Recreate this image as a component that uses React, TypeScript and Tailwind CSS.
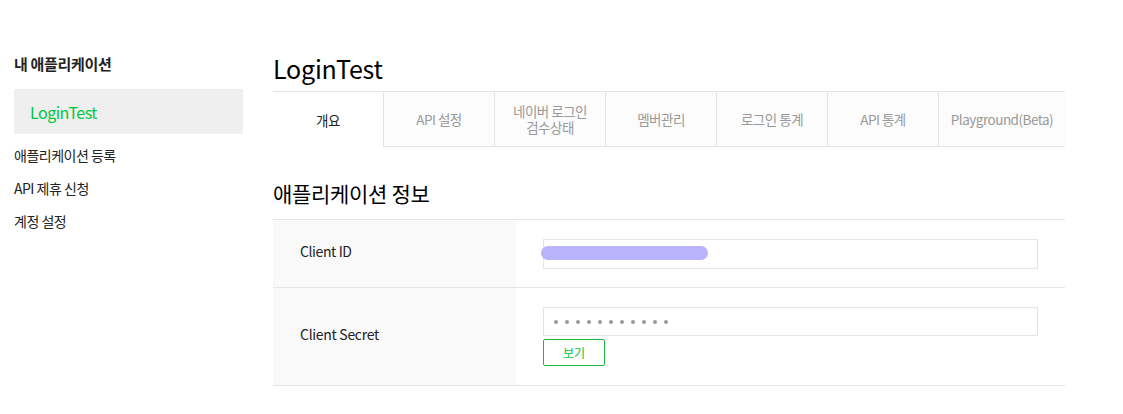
const tabs = ['개요', 'API 설정', '네이버 로그인\n검수상태', '멤버관리', '로그인 통계', 'API 통계', 'Playground(Beta)']

export default function App() {
  return (
    <div
      className="flex w-[1123px] h-[414px] bg-white text-[#333]"
      style={{ fontFamily: '"Noto Sans CJK KR", "Noto Sans", sans-serif' }}
    >
      {/* sidebar */}
      <div className="w-[229px] ml-[14px] pt-[53px] flex flex-col">
        <div className="text-[15px] font-bold leading-[22px] text-[#222] tracking-[-0.3px]">내 애플리케이션</div>
        <div className="mt-[14px] h-[45px] bg-[#efefef] flex items-center pl-[16px] text-[16px] text-[#00c73c] tracking-[-0.5px]">
          LoginTest
        </div>
        <div className="mt-[10px] flex flex-col gap-[11px] text-[14px] leading-[22px] text-[#222] tracking-[-0.5px]">
          <div>애플리케이션 등록</div>
          <div>API 제휴 신청</div>
          <div>계정 설정</div>
        </div>
      </div>

      {/* main */}
      <div className="ml-[30px] w-[792px] pt-[52px]">
        <div className="text-[25px] leading-[32px] text-black tracking-[-0.2px]">LoginTest</div>
        <div className="mt-[7px] flex h-[56px] border-t border-b border-[#e5e5e5]">
          {tabs.map((t, i) => (
            <div
              key={t}
              className={`flex items-center justify-center text-center whitespace-pre-line text-[13.5px] leading-[16px] tracking-[-0.5px] ${
                i === 0
                  ? 'w-[110px] bg-white text-[#222] -mb-px'
                  : i === tabs.length - 1
                    ? 'flex-1 bg-[#fcfcfc] text-[#999] border-l border-[#e5e5e5]'
                    : 'w-[111px] bg-[#fcfcfc] text-[#999] border-l border-[#e5e5e5]'
              }`}
            >
              {t}
            </div>
          ))}
        </div>

        <div className="mt-[30px] text-[21px] leading-[32px] text-black tracking-[-0.3px]">애플리케이션 정보</div>

        <div className="mt-[10px] border-t border-[#e5e5e5]">
          <div className="flex h-[68px] border-b border-[#e5e5e5]">
            <div className="w-[243px] bg-[#f9f9f9] pl-[27px] pt-[20px] text-[14px] leading-[22px] text-[#222] tracking-[-0.4px]">
              Client ID
            </div>
            <div className="pl-[27px] pt-[19px]">
              <div className="relative w-[495px] h-[30px] border border-[#e5e5e5] bg-white">
                <span className="absolute left-[12px] top-[5px] text-[12px] text-[#ddd]">.··..·</span>
                <div className="absolute left-[-3px] top-[6px] w-[167px] h-[14px] rounded-full bg-[#b9b3fb]" />
              </div>
            </div>
          </div>
          <div className="flex h-[98px] border-b border-[#e5e5e5]">
            <div className="w-[243px] bg-[#f9f9f9] pl-[27px] pb-[4px] flex items-center text-[14px] text-[#222] tracking-[-0.3px]">
              Client Secret
            </div>
            <div className="pl-[27px] pt-[19px]">
              <div className="w-[495px] h-[29px] border border-[#e5e5e5] bg-white flex items-center pl-[10px] gap-[7px]">
                {Array.from({ length: 11 }).map((_, i) => (
                  <span key={i} className="w-[4px] h-[4px] rounded-full bg-[#9a9a9a]" />
                ))}
              </div>
              <button className="mt-[3px] w-[62px] h-[27px] border border-[#1fb83f] rounded-[2px] bg-white text-[12px] text-[#00c73c] flex items-center justify-center">
                보기
              </button>
            </div>
          </div>
        </div>
      </div>
    </div>
  )
}
